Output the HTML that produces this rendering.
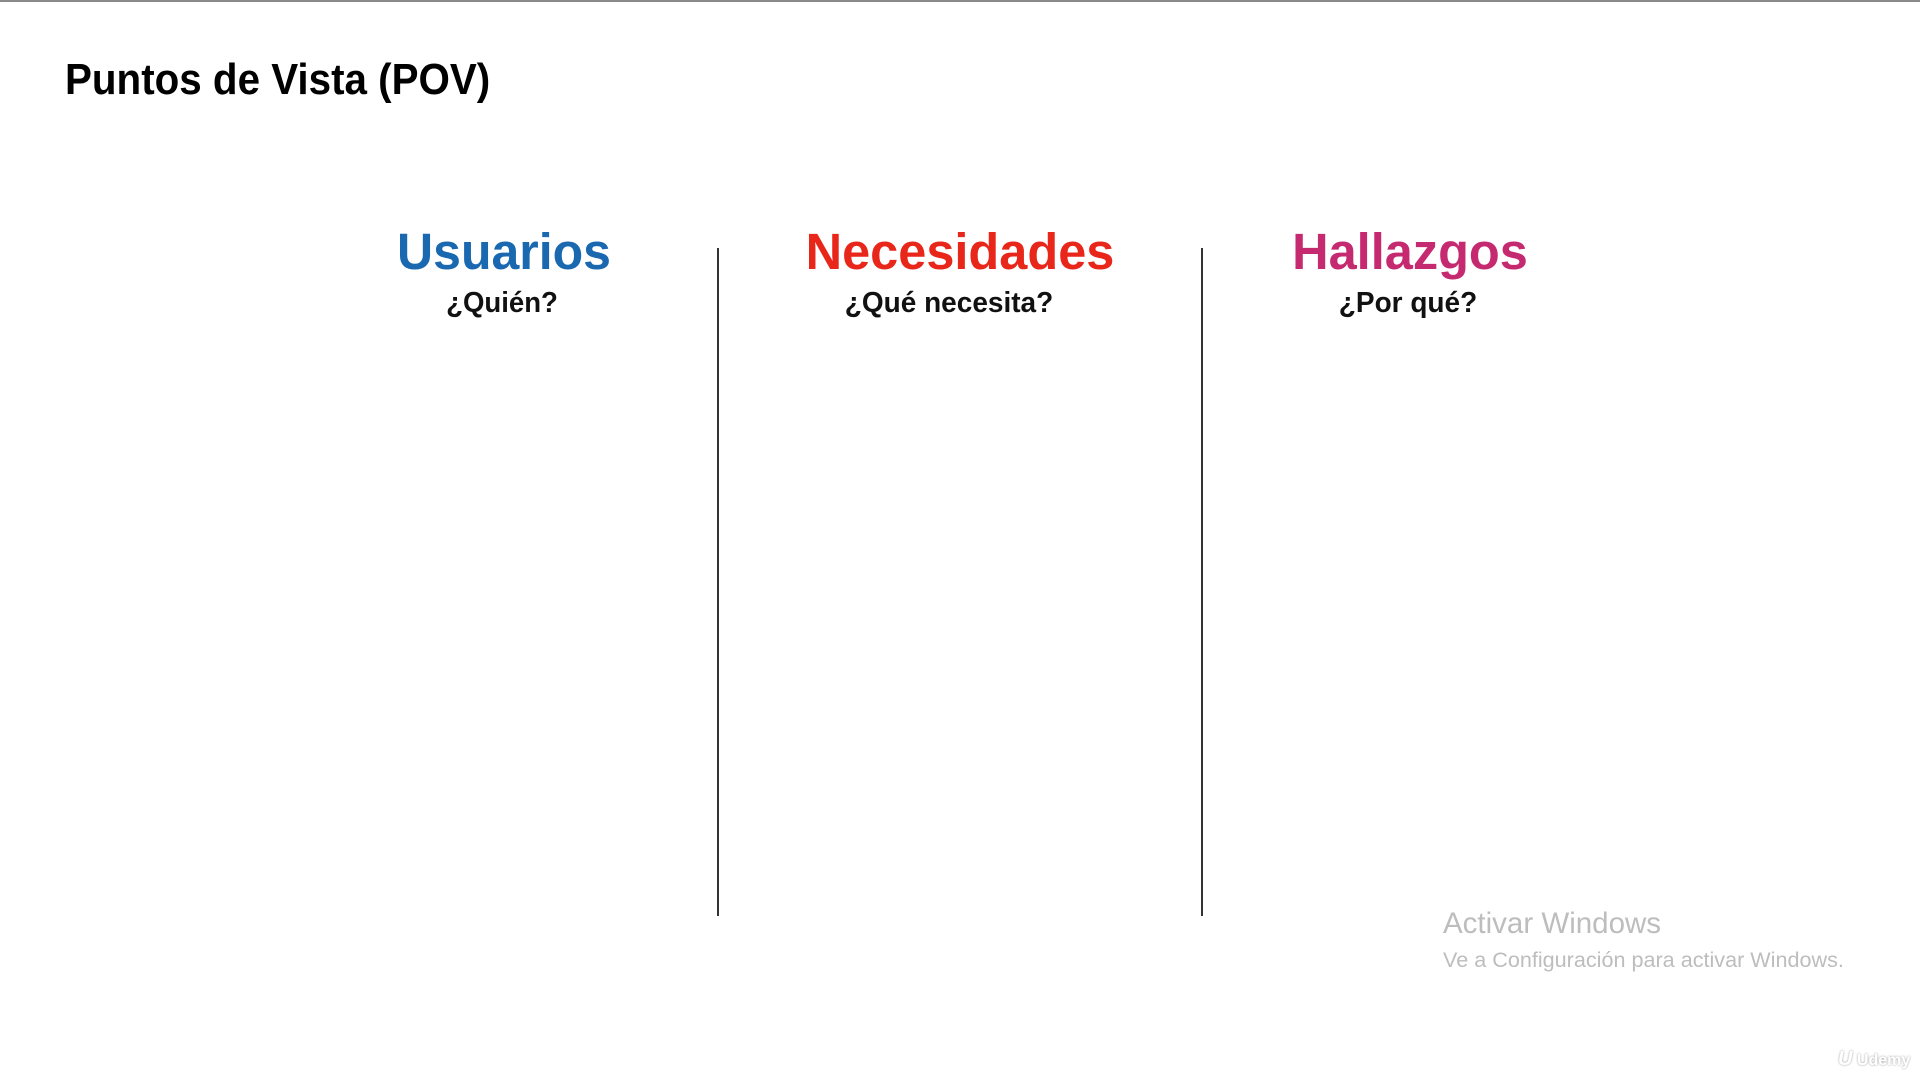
<!DOCTYPE html>
<html><head><meta charset="utf-8"><style>
html,body{margin:0;padding:0;width:1920px;height:1080px;background:#fff;overflow:hidden;position:relative;font-family:"Liberation Sans",Arial,sans-serif}
.t{position:absolute;white-space:nowrap;line-height:1}
.c{transform-origin:center top}
</style></head><body>
<div style="position:absolute;left:0;top:0;width:1920px;height:2px;background:#8a8a8a"></div>
<div class="t" style="left:65px;top:58px;font-size:44px;font-weight:bold;color:#000;transform:scaleX(0.917);transform-origin:left top">Puntos de Vista (POV)</div>

<div class="t c" style="left:304px;width:400px;text-align:center;top:226px;font-size:51px;font-weight:bold;color:#1a69b0;transform:scaleX(0.98)">Usuarios</div>
<div class="t c" style="left:760px;width:400px;text-align:center;top:226px;font-size:51px;font-weight:bold;color:#e8261a;transform:scaleX(0.99)">Necesidades</div>
<div class="t c" style="left:1210px;width:400px;text-align:center;top:226px;font-size:51px;font-weight:bold;color:#c52a70;transform:scaleX(0.99)">Hallazgos</div>

<div class="t c" style="left:302px;width:400px;text-align:center;top:289px;font-size:29px;font-weight:bold;color:#111;transform:scaleX(0.95)">¿Quién?</div>
<div class="t c" style="left:749px;width:400px;text-align:center;top:289px;font-size:29px;font-weight:bold;color:#111;transform:scaleX(0.965)">¿Qué necesita?</div>
<div class="t c" style="left:1208px;width:400px;text-align:center;top:289px;font-size:29px;font-weight:bold;color:#111;transform:scaleX(0.965)">¿Por qué?</div>

<div style="position:absolute;left:717px;top:248px;width:2px;height:668px;background:#333"></div>
<div style="position:absolute;left:1201px;top:248px;width:2px;height:668px;background:#333"></div>

<div class="t" style="left:1443px;top:909px;font-size:29.5px;color:#bdbdbd">Activar Windows</div>
<div class="t" style="left:1443px;top:949px;font-size:21.6px;color:#bdbdbd">Ve a Configuración para activar Windows.</div>
<div class="t" style="left:1838px;top:1049px;font-size:16px;font-weight:bold;color:#fff;text-shadow:0 0 2px #999"><span style="font-size:20px;font-style:italic">U</span> Udemy</div>
</body></html>
